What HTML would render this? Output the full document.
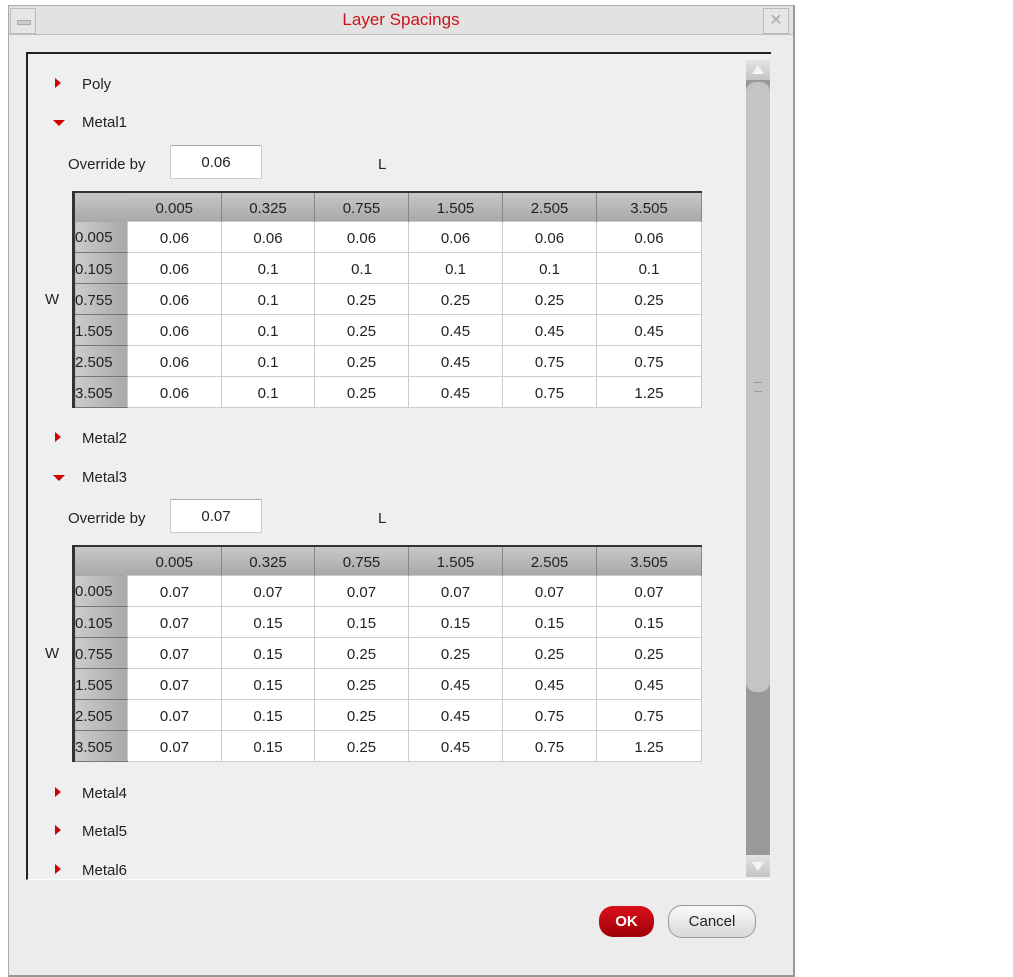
<!DOCTYPE html><html><head><style>
body{margin:0;width:1013px;height:977px;background:#fff;font-family:"Liberation Sans","DejaVu Sans",sans-serif;position:relative;overflow:hidden}
.win{position:absolute;left:8px;top:5px;width:784px;height:969px;background:#ececec;border:1px solid #aaa;border-right:2px solid #999;border-bottom:2px solid #999}
.title{position:absolute;left:0;top:0;width:784px;height:28px;background:#e2e2e2;border-bottom:1px solid #bbb}
.title span{position:absolute;left:0;width:784px;text-align:center;top:4px;color:#c8141a;font-size:17px}
.tb{position:absolute;top:2px;width:24px;height:24px;border:1px solid #bbb;background:#e6e6e6}
.panel{position:absolute;left:17px;top:46px;width:743px;height:825px;background:#efefef;border-top:2px solid #222;border-left:2px solid #222;border-bottom:1px solid #fff;overflow:hidden}
.lab{position:absolute;font-size:15px;color:#222;white-space:nowrap}
.tri{position:absolute;width:0;height:0}
.tr{border-top:5px solid transparent;border-bottom:5px solid transparent;border-left:6px solid #c00}
.td{border-left:6px solid transparent;border-right:6px solid transparent;border-top:6px solid #c00}
.inp{position:absolute;width:92px;height:34px;background:#fff;border:1px solid #ccc;border-top-color:#aaa;font-size:15px;text-align:center;line-height:34px;color:#222;box-sizing:border-box}
table{position:absolute;border-collapse:collapse;table-layout:fixed;width:628px;border-left:3px solid #333;border-top:2px solid #333;font-size:15px;color:#222}
td{height:28px;text-align:center;border:1px solid #ccc;background:#fff;padding:2px 0 0;overflow:hidden;white-space:nowrap;box-sizing:content-box}
tr.h td{background:linear-gradient(#c8c8c8,#a8a8a8);border:none;border-right:1px solid #888;height:26px}
td.rh{background:linear-gradient(90deg,#ccc,#a8a8a8);text-align:left;border:none;border-bottom:1px solid #777}
.sb{position:absolute;left:718px;top:6px;width:24px;height:817px;background:#999}
</style></head><body>
<div class="win">
 <div class="title"><div class="tb" style="left:1px"><div style="position:absolute;left:6px;top:11px;width:12px;height:3px;background:#ccc;border:1px solid #aaa"></div></div><span>Layer Spacings</span><div class="tb" style="left:754px;color:#aaa;font-size:16px;text-align:center;line-height:24px">✕</div></div>
 <div class="panel">
  <div class="sb"><div style="position:absolute;left:0;top:0;width:24px;height:20px;background:linear-gradient(#e4e4e4,#c4c4c4)"><div style="position:absolute;left:6px;top:5px;border-left:6px solid transparent;border-right:6px solid transparent;border-bottom:9px solid #f4f4f4"></div></div>
   <div style="position:absolute;left:0;top:22px;width:24px;height:610px;background:#c4c4c4;border-radius:10px"><div style="position:absolute;left:8px;top:300px;width:8px;height:8px;border-top:1px solid #999;border-bottom:1px solid #999"></div></div>
   <div style="position:absolute;left:0;top:795px;width:24px;height:22px;background:linear-gradient(#e4e4e4,#c4c4c4)"><div style="position:absolute;left:6px;top:7px;border-left:6px solid transparent;border-right:6px solid transparent;border-top:9px solid #f4f4f4"></div></div></div>
 </div>
</div>
<div id="c" style="position:absolute;left:0;top:0"></div>
<script>
var h='';
function tri(x,y,d){h+='<div class="tri '+(d?'td':'tr')+'" style="left:'+(d?53:55)+'px;top:'+y+'px"></div>';}
function lab(x,y,t){h+='<div class="lab" style="left:'+x+'px;top:'+y+'px">'+t+'</div>';}
[['Poly',83,0,78],['Metal1',121,1,120],['Metal2',437,0,432],['Metal3',476,1,475],['Metal4',792,0,787],['Metal5',830,0,825],['Metal6',869,0,864]].forEach(function(a){tri(0,a[3],a[2]);lab(82,a[1]-7,a[0]);});
var hd=['0.005','0.325','0.755','1.505','2.505','3.505'],rh=['0.005','0.105','0.755','1.505','2.505','3.505'],w=[94,93,94,94,94,105];
function tab(top,ov,rows){lab(68,top-35,'Override by');h+='<div class="inp" style="left:170px;top:'+(top-46)+'px">'+ov+'</div>';lab(378,top-35,'L');lab(45,top+100,'W');
 var s='<table style="top:'+top+'px;left:72px"><colgroup><col style="width:54px">';w.forEach(function(x){s+='<col style="width:'+x+'px">';});s+='</colgroup><tr class="h"><td class="rh" style="border:none;background:linear-gradient(#c8c8c8,#a8a8a8)"></td>';hd.forEach(function(x,i){s+='<td>'+x+'</td>';});s+='</tr>';
 rows.forEach(function(r,i){s+='<tr><td class="rh">'+rh[i]+'</td>';r.forEach(function(v){s+='<td>'+v+'</td>';});s+='</tr>';});h+=s+'</table>';}
tab(191,'0.06',[['0.06','0.06','0.06','0.06','0.06','0.06'],['0.06','0.1','0.1','0.1','0.1','0.1'],['0.06','0.1','0.25','0.25','0.25','0.25'],['0.06','0.1','0.25','0.45','0.45','0.45'],['0.06','0.1','0.25','0.45','0.75','0.75'],['0.06','0.1','0.25','0.45','0.75','1.25']]);
tab(545,'0.07',[['0.07','0.07','0.07','0.07','0.07','0.07'],['0.07','0.15','0.15','0.15','0.15','0.15'],['0.07','0.15','0.25','0.25','0.25','0.25'],['0.07','0.15','0.25','0.45','0.45','0.45'],['0.07','0.15','0.25','0.45','0.75','0.75'],['0.07','0.15','0.25','0.45','0.75','1.25']]);
h+='<div style="position:absolute;left:599px;top:906px;width:55px;height:31px;border-radius:14px;background:linear-gradient(#d8101a,#a00008);color:#fff;font-weight:bold;font-size:15px;text-align:center;line-height:31px">OK</div>';
h+='<div style="position:absolute;left:668px;top:905px;width:86px;height:31px;border-radius:14px;border:1px solid #999;background:linear-gradient(#fafafa,#d8d8d8);color:#222;font-size:15px;text-align:center;line-height:31px">Cancel</div>';
document.getElementById('c').innerHTML=h;
</script>
</body></html>
